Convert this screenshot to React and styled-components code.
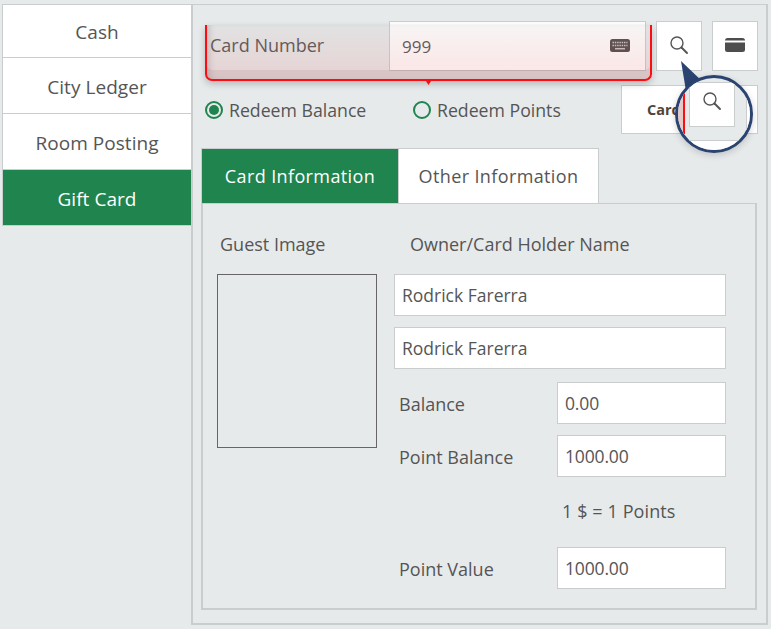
import React from 'react';
import styled, { createGlobalStyle } from 'styled-components';

const GREEN = '#1f844e';
const LINE = '#c9cdcd';
const BG = '#e7eaeb';
const TEXT = '#555555';
const NAVY = '#2a4370';

const Global = createGlobalStyle`
  html, body { margin: 0; padding: 0; background: ${BG}; }
  body { font-family: "Open Sans", "Noto Sans", sans-serif; color: ${TEXT}; width: 771px; height: 629px; overflow: hidden; }
  * { box-sizing: border-box; }
`;

const Page = styled.div`
  display: flex;
  align-items: flex-start;
  padding: 4px 0 0 2px;
  width: 771px;
  height: 629px;
`;

const Sidebar = styled.nav`
  width: 189px;
  flex: none;
  background: #fff;
  border: 1px solid ${LINE};
  border-right: none;
  display: flex;
  flex-direction: column;
`;

const SideItem = styled.div`
  height: ${p => p.$h}px;
  padding-top: 2px;
  display: flex;
  align-items: center;
  justify-content: center;
  font-size: 19px;
  letter-spacing: 0.05px;
  color: ${p => (p.$active ? '#fff' : TEXT)};
  background: ${p => (p.$active ? GREEN : '#fff')};
  border-bottom: 1px solid ${LINE};
  &:last-child { border-bottom: none; }
`;

const Main = styled.main`
  position: relative;
  width: 577px;
  height: 621px;
  border: 1px solid ${LINE};
  border-width: 1px 2px 2px 2px;
  padding: 16px 8px 0 8px;
`;

const TopRow = styled.div`
  display: flex;
  align-items: stretch;
  height: 50px;
  padding-left: 9px;
`;

const FieldLabel = styled.label`
  width: 179px;
  flex: none;
  font-size: 18px;
  line-height: 48px;
`;

const CardInput = styled.div`
  width: 257px;
  flex: none;
  background: #fff;
  border: 1px solid ${LINE};
  display: flex;
  align-items: center;
  justify-content: space-between;
  padding: 0 15px 0 12px;
  font-size: 17px;
`;

const IconButton = styled.button`
  width: 46px;
  flex: none;
  margin-left: ${p => p.$ml}px;
  background: #fff;
  border: 1px solid ${LINE};
  padding: 0 0 2px 0;
  display: flex;
  align-items: center;
  justify-content: center;
`;

const OptionRow = styled.div`
  display: flex;
  align-items: center;
  height: 49px;
  margin-top: 14px;
  padding-left: 4px;
`;

const RadioLabel = styled.label`
  display: flex;
  align-items: center;
  gap: 6px;
  width: ${p => p.$w}px;
  flex: none;
  font-size: 17.7px;
`;

const RadioMark = styled.span`
  width: 18px;
  height: 18px;
  flex: none;
  border-radius: 50%;
  border: 2px solid ${GREEN};
  display: flex;
  align-items: center;
  justify-content: center;
  &::after {
    content: '';
    width: 10px;
    height: 10px;
    border-radius: 50%;
    background: ${p => (p.$on ? GREEN : 'transparent')};
  }
`;

const WideButton = styled.button`
  margin-left: auto;
  margin-right: 0;
  width: 137px;
  height: 49px;
  background: #fff;
  border: 1px solid ${LINE};
  font: 700 14.5px "Open Sans", sans-serif;
  color: #4f4538;
  text-align: left;
  padding: 0 0 0 25px;
`;

const Tabs = styled.div`
  display: flex;
  margin-top: 14px;
  height: 55px;
`;

const Tab = styled.div`
  width: ${p => p.$w}px;
  display: flex;
  align-items: center;
  justify-content: center;
  font-size: 18px;
  letter-spacing: 0.38px;
  border: 1px solid ${LINE};
  border-left-width: ${p => (p.$first ? 1 : 0)}px;
  border-bottom: none;
  color: ${p => (p.$active ? '#fff' : TEXT)};
  background: ${p => (p.$active ? GREEN : '#fff')};
`;

const Panel = styled.section`
  width: 556px;
  height: 407px;
  border: 2px solid ${LINE};
  border-top-width: 1px;
  display: flex;
  padding: 28px 0 0 14px;
`;

const ImageColumn = styled.div`
  width: 177px;
  flex: none;
`;

const ColumnTitle = styled.div`
  font-size: 18px;
  height: 25px;
  line-height: 25px;
  white-space: nowrap;
  padding-left: ${p => p.$pl}px;
`;

const ImageBox = styled.div`
  width: 160px;
  height: 174px;
  margin-top: 17px;
  border: 1px solid #666;
`;

const FormColumn = styled.div`
  width: 332px;
  flex: none;
  display: flex;
  flex-direction: column;
`;

const Input = styled.div`
  height: 42px;
  width: ${p => p.$w}px;
  flex: none;
  background: #fff;
  border: 1px solid ${LINE};
  display: flex;
  align-items: center;
  padding-left: 7px;
  font-size: 17.5px;
  letter-spacing: ${p => (p.$num ? -0.15 : 0)}px;
  margin-top: ${p => p.$mt || 0}px;
`;

const Row = styled.div`
  display: flex;
  align-items: center;
  justify-content: space-between;
  height: 42px;
  padding-left: 5px;
  margin-top: ${p => p.$mt}px;
`;

const RowLabel = styled.span`
  font-size: 18px;
  position: relative;
  top: 1px;
`;

const Rate = styled.div`
  height: 70px;
  line-height: 68px;
  padding-left: 168px;
  font-size: 18px;
  letter-spacing: 0.1px;
`;

const Callout = styled.div`
  position: absolute;
  left: 12px;
  top: 20px;
  width: 447px;
  height: 56px;
  border: 2px solid #fb0d12;
  border-top: none;
  border-radius: 0 0 7px 7px;
  background: linear-gradient(180deg, rgba(190, 170, 165, 0.12) 0%, rgba(225, 80, 80, 0.14) 85%);
  box-shadow: 0 3px 7px rgba(0, 0, 0, 0.22), inset 0 -9px 0 rgba(110, 60, 60, 0.1), inset 6px 0 6px -4px rgba(90, 70, 70, 0.25);
  pointer-events: none;
  &::after {
    content: '';
    position: absolute;
    left: 218px;
    bottom: -6px;
    width: 7px;
    height: 7px;
    background: #fb0d12;
    clip-path: polygon(0 20%, 100% 20%, 50% 100%);
  }
`;

const Pointer = styled.svg`
  position: absolute;
  left: 487px;
  top: 54px;
`;

const Lens = styled.div`
  position: absolute;
  left: 482px;
  top: 70px;
  width: 78px;
  height: 78px;
  border-radius: 50%;
  border: 3px solid ${NAVY};
  background: ${BG};
  overflow: hidden;
  box-shadow: 0 2px 7px rgba(0, 0, 0, 0.18);
`;

const LensPink = styled.div`
  position: absolute;
  left: 0;
  top: 0;
  width: 6px;
  height: 56px;
  background: #e5c9c9;
`;

const LensRed = styled.div`
  position: absolute;
  left: 5px;
  top: 0;
  width: 2px;
  height: 56px;
  background: #fb0d12;
`;

const LensButton = styled.div`
  position: absolute;
  left: 11px;
  top: 4px;
  width: 46px;
  height: 45px;
  background: #fff;
  border: 1px solid ${LINE};
  display: flex;
  align-items: center;
  justify-content: center;
  padding: 0 0 7px 0;
`;

const LensSide = styled.div`
  position: absolute;
  left: 68px;
  top: 0;
  width: 12px;
  height: 56px;
  background: #fff;
  border-bottom: 1px solid ${LINE};
  border-left: 1px solid ${LINE};
`;

const LensLower = styled.div`
  position: absolute;
  left: 0;
  top: 62px;
  width: 100%;
  height: 14px;
  background: #fff;
  border-top: 1px solid ${LINE};
`;

const LensEdge = styled.div`
  position: absolute;
  left: 0;
  top: 55px;
  width: 6px;
  height: 1px;
  background: ${LINE};
`;

const SearchIcon = () => (
  <svg width="20" height="20" viewBox="0 0 20 20" fill="none" stroke="#555" strokeLinecap="round">
    <circle cx="8" cy="8" r="6" strokeWidth="1.4" />
    <path d="M12.5 12.5 L18 18" strokeWidth="1.9" />
  </svg>
);

const KeyboardIcon = () => (
  <svg width="20" height="14" viewBox="0 0 20 14">
    <rect x="0" y="0" width="20" height="13" rx="2.5" fill="#4f4a4a" />
    <path d="M2.5 3.5h15M2.5 6.5h15" stroke="#c9c5c5" strokeWidth="1.5" strokeDasharray="1.5 .8" />
    <path d="M5 9.7h10" stroke="#c9c5c5" strokeWidth="1.5" />
  </svg>
);

const CardIcon = () => (
  <svg width="20" height="14" viewBox="0 0 20 14">
    <rect x="0" y="0" width="20" height="14" rx="2.5" fill="#4d4d4d" />
    <rect x="0" y="2.5" width="20" height="2" fill="#fff" />
  </svg>
);

export default function App() {
  return (
    <>
      <Global />
      <Page>
        <Sidebar>
          <SideItem $h={53}>Cash</SideItem>
          <SideItem $h={56}>City Ledger</SideItem>
          <SideItem $h={56}>Room Posting</SideItem>
          <SideItem $h={55} $active>Gift Card</SideItem>
        </Sidebar>
        <Main>
          <TopRow>
            <FieldLabel>Card Number</FieldLabel>
            <CardInput>
              <span>999</span>
              <KeyboardIcon />
            </CardInput>
            <IconButton $ml={10}><SearchIcon /></IconButton>
            <IconButton $ml={10}><CardIcon /></IconButton>
          </TopRow>
          <OptionRow>
            <RadioLabel $w={208}><RadioMark $on />Redeem Balance</RadioLabel>
            <RadioLabel $w={200}><RadioMark />Redeem Points</RadioLabel>
            <WideButton>Card</WideButton>
          </OptionRow>
          <Tabs>
            <Tab $w={198} $first $active>Card Information</Tab>
            <Tab $w={200}>Other Information</Tab>
          </Tabs>
          <Panel>
            <ImageColumn>
              <ColumnTitle $pl={3}>Guest Image</ColumnTitle>
              <ImageBox />
            </ImageColumn>
            <FormColumn>
              <ColumnTitle $pl={16}>Owner/Card Holder Name</ColumnTitle>
              <Input $w={332} $mt={17}>Rodrick Farerra</Input>
              <Input $w={332} $mt={11}>Rodrick Farerra</Input>
              <Row $mt={13}>
                <RowLabel>Balance</RowLabel>
                <Input $w={169} $num>0.00</Input>
              </Row>
              <Row $mt={11}>
                <RowLabel>Point Balance</RowLabel>
                <Input $w={169} $num>1000.00</Input>
              </Row>
              <Rate>1 $ = 1 Points</Rate>
              <Row $mt={0}>
                <RowLabel>Point Value</RowLabel>
                <Input $w={169} $num>1000.00</Input>
              </Row>
            </FormColumn>
          </Panel>
          <Callout />
          <Pointer width="30" height="40" viewBox="0 0 30 40">
            <path d="M1 2 L24 24 L7 38 Z" fill={NAVY} />
          </Pointer>
          <Lens>
            <LensPink />
            <LensRed />
            <LensEdge />
            <LensButton><SearchIcon /></LensButton>
            <LensSide />
            <LensLower />
          </Lens>
        </Main>
      </Page>
    </>
  );
}
